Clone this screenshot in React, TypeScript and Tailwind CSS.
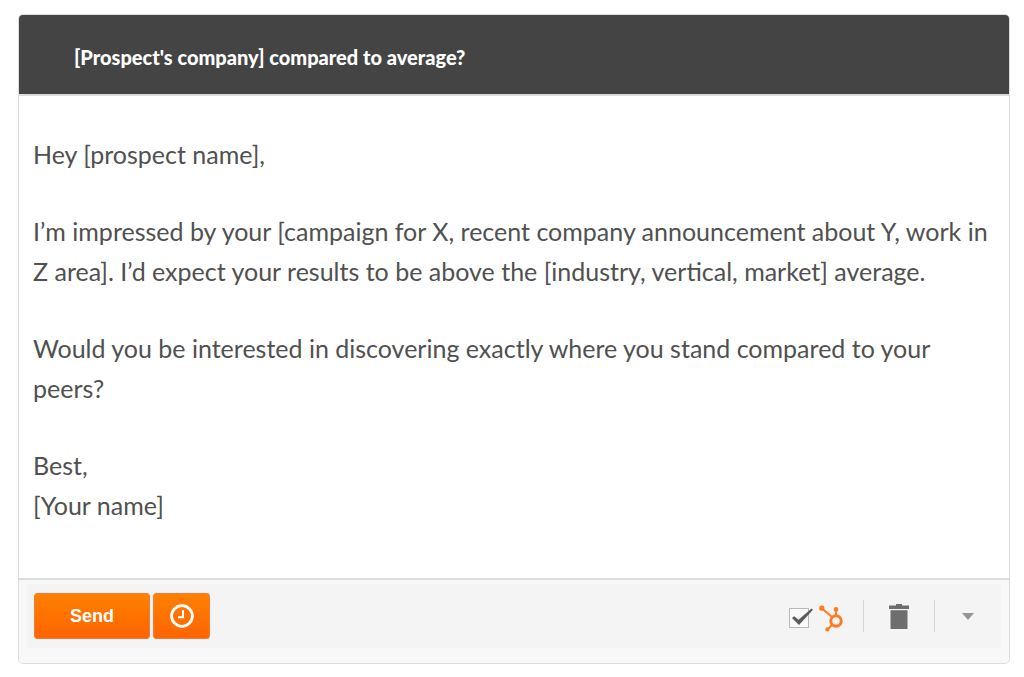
const SUBJECT = "[Prospect's company] compared to average?";

const PARAGRAPHS = [
  ["Hey [prospect name],"],
  [
    "I’m impressed by your [campaign for X, recent company announcement about Y, work in Z area]. I’d expect your results to be above the [industry, vertical, market] average.",
  ],
  [
    "Would you be interested in discovering exactly where you stand compared to your peers?",
  ],
  ["Best,", "[Your name]"],
];

const ClockIcon = () => (
  <svg viewBox="0 0 24 24" className="size-6" fill="none" stroke="#fff" aria-hidden="true">
    <circle cx="12" cy="12" r="10.4" strokeWidth="2.8" />
    <path d="M13 6.3v6.9H8" strokeWidth="2" />
  </svg>
);

const SprocketIcon = () => (
  <svg viewBox="0 0 24 27" className="h-[27px] w-6" fill="none" stroke="#ff7a21" aria-hidden="true">
    <circle cx="17" cy="16" r="5.2" strokeWidth="3" />
    <path d="M3 3.5 13 12M17 5v6M13 20 9 24" strokeWidth="2" />
    <g fill="#ff7a21" stroke="none">
      <circle cx="2.8" cy="3.2" r="2.6" />
      <circle cx="17" cy="4.4" r="2.3" />
      <circle cx="8.4" cy="24.4" r="2.1" />
    </g>
  </svg>
);

const TrashIcon = () => (
  <svg viewBox="0 0 20 25" className="h-[25px] w-5" fill="#6e6e6e" aria-hidden="true">
    <path d="M7 0h6v1.5h7V5H0V1.5h7z" />
    <path d="M1.5 6.2h17V25h-17z" />
  </svg>
);

const Divider = () => <div className="h-8 w-px bg-[#d6d6d6]" />;

const TrackToggle = () => (
  <label className="flex items-center gap-2.5 pt-1">
    <span className="relative flex">
      <input
        type="checkbox"
        defaultChecked
        aria-label="Track email"
        className="peer size-5 appearance-none border border-[#b8b8b8] bg-[#fafafa]"
      />
      <svg
        viewBox="0 0 22 18"
        className="pointer-events-none absolute left-[3px] top-0 hidden h-[18px] w-[22px] peer-checked:block"
        fill="#5c5c5c"
        aria-hidden="true"
      >
        <path d="M0 10 2.2 8.2 6.5 11.8 19.5.5 21 1.8 7 17z" />
      </svg>
    </span>
    <SprocketIcon />
  </label>
);

const Toolbar = () => (
  <div className="rounded-b-[5px] border-t-2 border-[#dcdcdc] bg-[#f8f8f8] px-2 pb-[15px] pt-1">
    <div className="flex items-center justify-between bg-[#f4f4f4] px-[7px] py-[9px]">
      <div className="flex gap-[3px]">
        <button
          type="button"
          className="h-[46px] w-[116px] rounded-[3px] border border-[#f47a3c] bg-linear-to-b from-[#ff8000] to-[#ff6400] font-['Liberation_Sans',Arial,sans-serif] text-lg font-bold text-white"
        >
          Send
        </button>
        <button
          type="button"
          aria-label="Schedule"
          className="flex h-[46px] w-[57px] items-center justify-center rounded-[3px] border border-[#f47a3c] bg-linear-to-b from-[#ff8000] to-[#ff6400]"
        >
          <ClockIcon />
        </button>
      </div>

      <div className="flex items-center gap-5 pr-5">
        <TrackToggle />
        <Divider />
        <button type="button" aria-label="Delete" className="px-[5px]">
          <TrashIcon />
        </button>
        <Divider />
        <button type="button" aria-label="More options" className="pl-[7px]">
          <svg viewBox="0 0 12 7" className="h-[7px] w-3" fill="#969696" aria-hidden="true">
            <path d="M0 0h12L6 7z" />
          </svg>
        </button>
      </div>
    </div>
  </div>
);

export default function App() {
  return (
    <div className="min-h-screen bg-white px-[14px] pt-[14px] pl-[18px] font-[Lato,sans-serif]">
      <main className="rounded-[5px] border border-[#dcdcdc]">
        <header className="flex h-[79px] items-center rounded-t-[4px] bg-[#444] px-[55px] pt-1">
          <h1 className="text-xl font-black text-white">{SUBJECT}</h1>
        </header>

        <article className="space-y-[37px] border-t-2 border-[#dcdcdc] px-[14px] pb-[53px] pt-[38px] text-[25px] leading-10 text-[#505050]">
          {PARAGRAPHS.map((lines) => (
            <p key={lines[0]}>
              {lines.map((line) => (
                <span key={line} className="block">
                  {line}
                </span>
              ))}
            </p>
          ))}
        </article>

        <Toolbar />
      </main>
    </div>
  );
}
